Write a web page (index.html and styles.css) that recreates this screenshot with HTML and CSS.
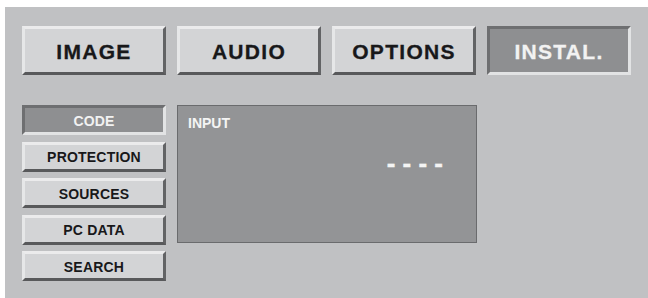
FILE: index.html
```html
<!DOCTYPE html>
<html>
<head>
<meta charset="utf-8">
<link rel="stylesheet" href="styles.css">
</head>
<body>
<div class="panel">
  <div class="tabs">
    <div class="tab">IMAGE</div>
    <div class="tab">AUDIO</div>
    <div class="tab">OPTIONS</div>
    <div class="tab active">INSTAL.</div>
  </div>
  <div class="main">
    <div class="side">
      <div class="sbtn active">CODE</div>
      <div class="sbtn">PROTECTION</div>
      <div class="sbtn">SOURCES</div>
      <div class="sbtn">PC DATA</div>
      <div class="sbtn">SEARCH</div>
    </div>
    <div class="input">
      <div class="label">INPUT</div>
      <div class="dashes">- - - -</div>
    </div>
  </div>
</div>
</body>
</html>
```

FILE: styles.css
```css
html, body {
  margin: 0;
  padding: 0;
  background: #ffffff;
}
body {
  font-family: "Liberation Sans", Arial, sans-serif;
  font-weight: bold;
}
.panel {
  margin: 7px 0 0 5px;
  height: 291px;
  background: #c0c1c3;
  padding: 19px 0 0 17px;
  box-sizing: border-box;
}
.tabs {
  display: flex;
  gap: 11px;
}
.tab {
  width: 144px;
  height: 49px;
  box-sizing: border-box;
  background: #d3d4d6;
  border: 3px solid;
  border-color: #ebebec #626365 #58595b #e6e7e8;
  display: flex;
  align-items: center;
  justify-content: center;
  font-size: 21px;
  letter-spacing: 1.3px;
  color: #18181a;
  padding-top: 2px;
  -webkit-text-stroke: 0.3px #18181a;
}
.tab.active {
  background: #8e8f91;
  border-color: #6e6f71 #e2e3e4 #e2e3e4 #6e6f71;
  color: #f2f2f2;
  -webkit-text-stroke: 0.3px #f2f2f2;
}
.main {
  display: flex;
  gap: 11px;
  margin-top: 30px;
}
.side {
  width: 144px;
  display: flex;
  flex-direction: column;
  gap: 6.5px;
}
.sbtn {
  height: 30px;
  box-sizing: border-box;
  background: #d3d4d6;
  border: 3px solid;
  border-color: #ebebec #626365 #58595b #e6e7e8;
  display: flex;
  align-items: center;
  justify-content: center;
  font-size: 14px;
  letter-spacing: 0.2px;
  color: #18181a;
  padding-top: 1px;
}
.sbtn.active {
  background: #8e8f91;
  border-color: #6e6f71 #e2e3e4 #e2e3e4 #6e6f71;
  color: #f2f2f2;
}
.input {
  width: 300px;
  height: 138px;
  box-sizing: border-box;
  background: #939496;
  border: 1px solid #6a6b6d;
  padding: 9px 0 0 10px;
  color: #f4f4f4;
}
.label {
  font-size: 14px;
  line-height: 16px;
}
.dashes {
  margin-top: 17px;
  padding-right: 33px;
  text-align: right;
  font-size: 26px;
  line-height: 30px;
  -webkit-text-stroke: 0.4px #f4f4f4;
}
```
